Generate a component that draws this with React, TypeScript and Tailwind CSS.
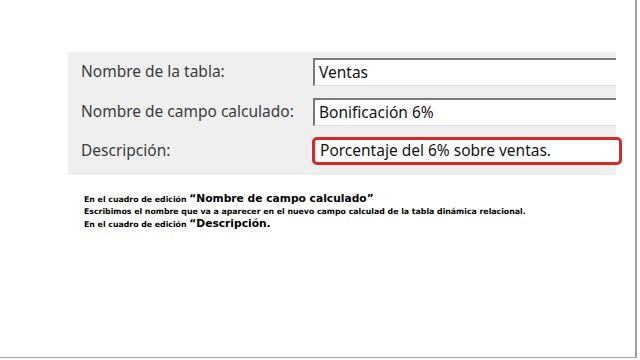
export default function App() {
  const label = "text-[15.5px] text-[#3c3c3c] leading-none"
  const inputBase =
    "h-[28px] flex items-center pl-[4px] text-[15.5px] text-[#141414] bg-white border-t-2 border-l-2 border-t-[#7a7a7a] border-l-[#7a7a7a] border-b border-b-[#e3e3e3]"
  return (
    <div className="w-[640px] h-[360px] bg-white overflow-hidden" style={{ fontFamily: '"Noto Sans", "Liberation Sans", sans-serif' }}>
      <div className="w-[637px] h-[358px] border-r-2 border-b border-[#a0a0a0] pt-[52px] pl-[68px]">
        <div className="w-[548px] h-[123px] bg-[#efeff0] pt-[6px]">
          <div className="flex items-center h-[28px]">
            <div className={`w-[245px] shrink-0 pl-[13px] ${label}`}>Nombre de la tabla:</div>
            <div className={`flex-1 ${inputBase}`}>Ventas</div>
          </div>
          <div className="flex items-center h-[28px] mt-[12px]">
            <div className={`w-[245px] shrink-0 pl-[13px] ${label}`}>Nombre de campo calculado:</div>
            <div className={`flex-1 ${inputBase}`}>Bonificación 6%</div>
          </div>
          <div className="flex items-center h-[28px] mt-[11px]">
            <div className={`w-[244px] shrink-0 pl-[13px] ${label}`}>Descripción:</div>
            <div className="w-[310px] shrink-0 h-[28px] flex items-center pl-[5px] text-[15.5px] text-[#141414] bg-white border-[3px] border-[#d42a22] rounded-[5px]">
              Porcentaje del 6% sobre ventas.
            </div>
          </div>
        </div>
        <div className="mt-[18px] pl-[16px] text-black font-bold" style={{ fontFamily: '"DejaVu Sans", sans-serif' }}>
          <div className="text-[7.8px] leading-[11px]">
            En el cuadro de edición <span className="text-[10.7px] leading-[11px]">“Nombre de campo calculado”</span>
          </div>
          <div className="text-[7.8px] leading-[13px]">
            Escribimos el nombre que va a aparecer en el nuevo campo calculad de la tabla dinámica relacional.
          </div>
          <div className="text-[7.8px] leading-[12px]">
            En el cuadro de edición <span className="text-[10.7px] leading-[12px]">“Descripción.</span>
          </div>
        </div>
      </div>
    </div>
  )
}
